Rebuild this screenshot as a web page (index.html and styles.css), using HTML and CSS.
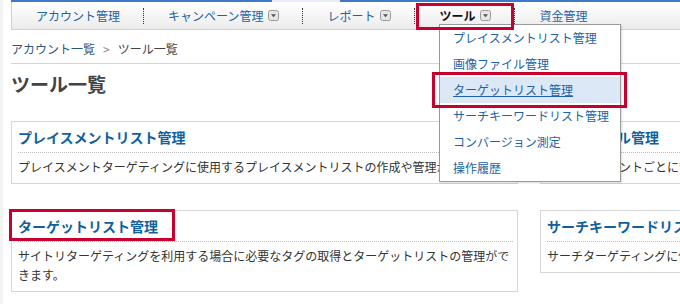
FILE: index.html
```html
<!DOCTYPE html>
<html lang="ja">
<head>
<meta charset="utf-8">
<title>ツール一覧</title>
<link rel="stylesheet" href="styles.css">
</head>
<body>
<div class="page">
  <div class="topline"><span class="notch"></span></div>
  <nav class="nav">
    <div class="nav-item"><span class="nav-link">アカウント管理</span></div>
    <div class="nav-item"><span class="nav-link">キャンペーン管理</span><svg class="dd" width="11" height="11" viewBox="0 0 11 11"><rect x="0.5" y="0.5" width="10" height="10" rx="2"/><path d="M3 4.2h5l-2.5 3z"/></svg></div>
    <div class="nav-item"><span class="nav-link">レポート</span><svg class="dd" width="11" height="11" viewBox="0 0 11 11"><rect x="0.5" y="0.5" width="10" height="10" rx="2"/><path d="M3 4.2h5l-2.5 3z"/></svg></div>
    <div class="nav-item current"><span class="nav-link">ツール</span><svg class="dd" width="11" height="11" viewBox="0 0 11 11"><rect x="0.5" y="0.5" width="10" height="10" rx="2"/><path d="M3 4.2h5l-2.5 3z"/></svg></div>
    <div class="nav-item"><span class="nav-link">資金管理</span></div>
  </nav>
  <div class="crumbs"><span class="crumb-link">アカウント一覧</span><span class="crumb-sep">&gt;</span><span class="crumb-current">ツール一覧</span></div>
  <h1 class="heading">ツール一覧</h1>
  <div class="cards">
    <section class="card">
      <h2 class="card-title">プレイスメントリスト管理</h2>
      <p class="card-desc">プレイスメントターゲティングに使用するプレイスメントリストの作成や管理ができます。</p>
    </section>
    <section class="card">
      <h2 class="card-title">画像ファイル管理</h2>
      <p class="card-desc">画像をアカウントごとに管理できます。</p>
    </section>
    <section class="card">
      <h2 class="card-title">ターゲットリスト管理</h2>
      <p class="card-desc">サイトリターゲティングを利用する場合に必要なタグの取得とターゲットリストの管理ができます。</p>
    </section>
    <section class="card">
      <h2 class="card-title">サーチキーワードリスト管理</h2>
      <p class="card-desc">サーチターゲティングに使用するサーチキーワードリストの作成や管理ができます。</p>
    </section>
  </div>

  <ul class="menu">
    <li class="menu-item">プレイスメントリスト管理</li>
    <li class="menu-item">画像ファイル管理</li>
    <li class="menu-item active">ターゲットリスト管理</li>
    <li class="menu-item">サーチキーワードリスト管理</li>
    <li class="menu-item">コンバージョン測定</li>
    <li class="menu-item">操作履歴</li>
  </ul>

  <div class="mark mark-nav"></div>
  <div class="mark mark-menu"></div>
  <div class="mark mark-card"></div>
</div>
</body>
</html>
```

FILE: styles.css
```css
html, body {
  margin: 0;
  padding: 0;
  background: #ffffff;
  overflow: hidden;
}
body {
  font-family: "Noto Sans CJK JP", "Noto Sans", sans-serif;
  font-size: 12px;
  color: #333333;
  width: 680px;
  height: 304px;
  border-left: 3px solid #f3f3f3;
  box-sizing: border-box;
}
.page {
  position: relative;
  width: 1100px;
  padding-left: 8px;
}
.topline {
  height: 2px;
  background: #3f78c8;
  position: relative;
}
.notch {
  position: absolute;
  left: 261px;
  top: 0;
  width: 68px;
  height: 2px;
  background: #e9eef6;
}
.nav {
  display: flex;
  height: 27px;
  border-left: 1px solid #cfcfcf;
  border-bottom: 1px solid #cfcfcf;
  background: linear-gradient(#ffffff, #ececec);
}
.nav-item {
  display: flex;
  align-items: center;
  gap: 5px;
  padding: 0 23px 0 24px;
  position: relative;
}
.nav-item + .nav-item::before {
  content: "";
  position: absolute;
  left: -1px;
  top: 6px;
  height: 16px;
  border-left: 1px dotted #333333;
}
.nav-item + .nav-item {
  margin-left: 1px;
}
.nav-link {
  color: #1d62a6;
  line-height: 27px;
}
.current .nav-link {
  color: #111111;
  font-weight: bold;
}
.dd rect {
  fill: #e6e6e6;
  stroke: #9a9a9a;
}
.dd path {
  fill: #555555;
}
.crumbs {
  height: 24px;
  padding-top: 9px;
  line-height: 20px;
  border-bottom: 1px solid #d6d6d6;
  color: #444444;
}
.crumb-link {
  color: #2f557f;
}
.crumb-sep {
  color: #888888;
  padding: 0 8px;
}
.heading {
  margin: 8px 0 0;
  font-size: 19px;
  line-height: 24px;
  font-weight: bold;
  color: #444444;
}
.cards {
  display: grid;
  grid-template-columns: 507px 507px;
  column-gap: 22px;
  row-gap: 26px;
  align-items: start;
  margin-top: 25px;
}
.card {
  border: 1px solid #d6d6d6;
  padding: 0 4px 7px 6px;
}
.card-title {
  margin: 0;
  padding: 5px 0 5px;
  font-size: 14px;
  line-height: 20px;
  font-weight: bold;
  color: #105f9e;
  border-bottom: 1px dotted #bbbbbb;
}
.card-desc {
  margin: 0;
  padding-top: 4px;
  line-height: 19px;
  color: #333333;
}
.menu {
  position: absolute;
  left: 436px;
  top: 24px;
  width: 180px;
  margin: 0;
  padding: 0;
  list-style: none;
  background: #ffffff;
  border: 1px solid #9a9a9a;
  box-shadow: 1px 1px 2px rgba(0,0,0,0.15);
}
.menu-item {
  height: 26px;
  line-height: 26px;
  padding-left: 13px;
  color: #1d62a6;
}
.menu-item.active {
  background: #dce8f5;
  text-decoration: underline;
}
.mark {
  position: absolute;
  border: 3px solid #c8002e;
  box-sizing: border-box;
}
.mark-nav {
  left: 413px;
  top: 3px;
  width: 98px;
  height: 27px;
}
.mark-menu {
  left: 429px;
  top: 72px;
  width: 195px;
  height: 36px;
}
.mark-card {
  left: 6px;
  top: 209px;
  width: 166px;
  height: 32px;
}
```
